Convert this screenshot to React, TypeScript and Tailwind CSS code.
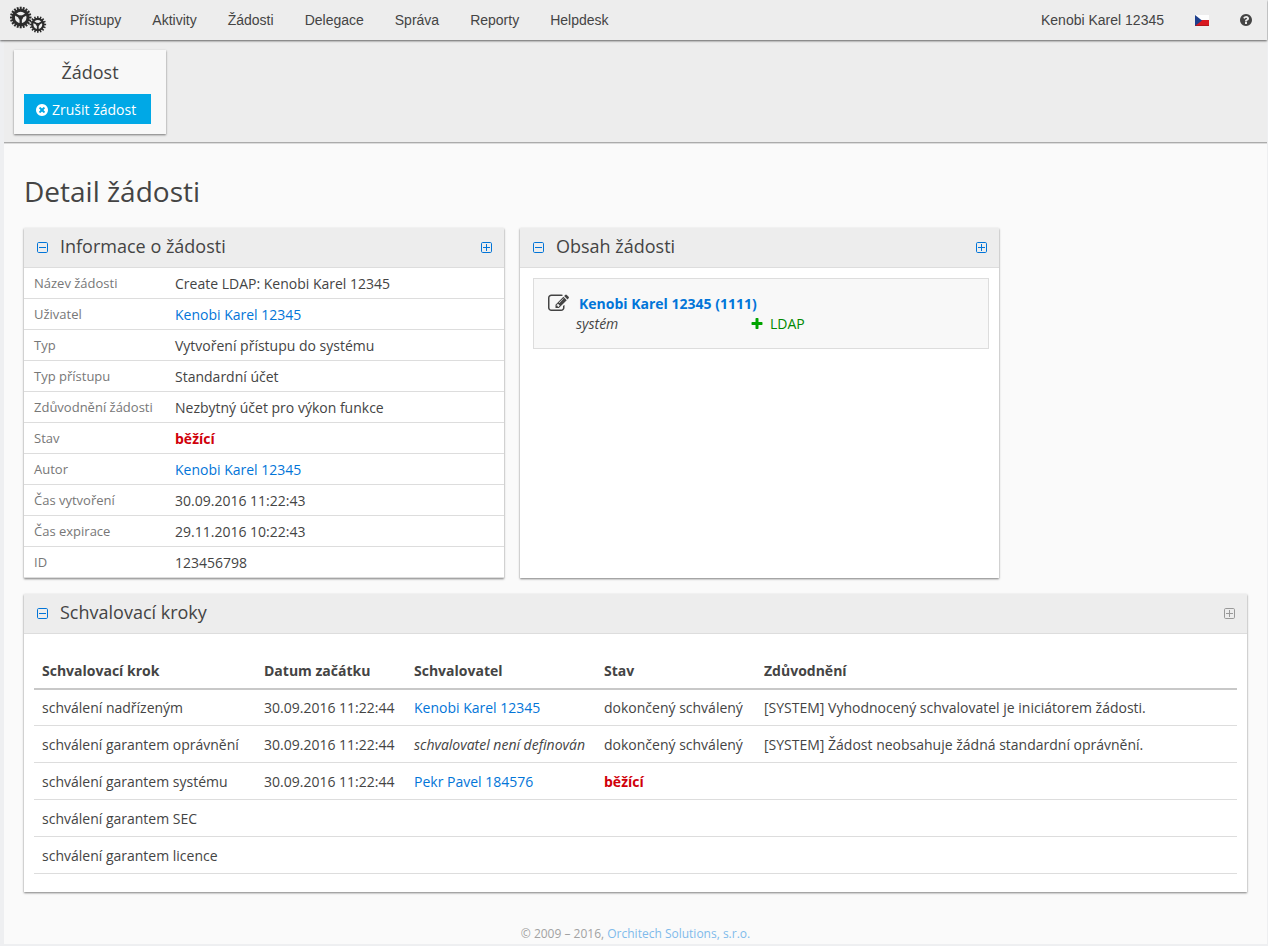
import React from "react";

const ICONS = {
  edit: "M888 1184l116-116-152-152-116 116v56h96v96h56zm440-720q-16-16-33 1l-350 350q-17 17-1 33t33-1l350-350q17-17 1-33zm80 594v190q0 119-84.5 203.5t-203.5 84.5h-832q-119 0-203.5-84.5t-84.5-203.5v-832q0-119 84.5-203.5t203.5-84.5h832q63 0 117 25 15 7 18 23 3 17-9 29l-49 49q-14 14-32 8-23-6-45-6h-832q-66 0-113 47t-47 113v832q0 66 47 113t113 47h832q66 0 113-47t47-113v-126q0-13 9-22l64-64q15-15 35-7t20 29zm-96-738l288 288-672 672h-288v-288zm444 132l-92 92-288-288 92-92q28-28 68-28t68 28l152 152q28 28 28 68t-28 68z",
  plus: "M1600 736v192q0 40-28 68t-68 28h-416v416q0 40-28 68t-68 28h-192q-40 0-68-28t-28-68v-416h-416q-40 0-68-28t-28-68v-192q0-40 28-68t68-28h416v-416q0-40 28-68t68-28h192q40 0 68 28t28 68v416h416q40 0 68 28t28 68z",
  cancel:
    "M1277 1122q0-26-19-45l-181-181 181-181q19-19 19-45 0-27-19-46l-90-90q-19-19-46-19-26 0-45 19l-181 181-181-181q-19-19-45-19-27 0-46 19l-90 90q-19 19-19 46 0 26 19 45l181 181-181 181q-19 19-19 45 0 27 19 46l90 90q19 19 46 19 26 0 45-19l181-181 181 181q19 19 45 19 27 0 46-19l90-90q19-19 19-46zm387-226q0 209-103 385.5t-279.5 279.5-385.5 103-385.5-103-279.5-279.5-103-385.5 103-385.5 279.5-279.5 385.5-103 385.5 103 279.5 279.5 103 385.5z",
  help:
    "M1024 1376v-192q0-14-9-23t-23-9h-192q-14 0-23 9t-9 23v192q0 14 9 23t23 9h192q14 0 23-9t9-23zm256-672q0-88-55.5-163t-138.5-116-170-41q-243 0-371 213-15 24 8 42l132 100q7 6 19 6 16 0 25-12 53-68 86-92 34-24 86-24 48 0 85.5 26t37.5 59q0 38-20 61t-68 45q-63 28-115.5 86.5t-52.5 125.5v36q0 14 9 23t23 9h192q14 0 23-9t9-23q0-19 21.5-49.5t54.5-49.5q32-18 49-28.5t46-35 44.5-48 28-60.5 12.5-81zm384 192q0 209-103 385.5t-279.5 279.5-385.5 103-385.5-103-279.5-279.5-103-385.5 103-385.5 279.5-279.5 385.5-103 385.5 103 279.5 279.5 103 385.5z",
};

function Icon({ name, className }: { name: keyof typeof ICONS; className: string }) {
  return (
    <svg viewBox="0 0 1792 1792" fill="currentColor" aria-hidden="true" className={className}>
      <path d={ICONS[name]} />
    </svg>
  );
}

function Gear({ cx, cy, r, teeth }: { cx: number; cy: number; r: number; teeth: number }) {
  return (
    <g transform={`translate(${cx} ${cy}) scale(${r / 11})`}>
      {Array.from({ length: teeth }, (_, i) => (
        <rect key={i} x="-1" y="-11" width="2" height="3.5" transform={`rotate(${(i * 360) / teeth})`} />
      ))}
      <circle r="7.4" fill="none" stroke="currentColor" strokeWidth="3" />
      {[60, 180, 300].map((angle) => (
        <rect key={angle} x="-1.2" y="-7" width="2.4" height="7" transform={`rotate(${angle})`} />
      ))}
      <circle r="2.4" />
    </g>
  );
}

function Logo() {
  return (
    <svg viewBox="0 0 37 28" fill="currentColor" aria-hidden="true" className="h-7 w-[37px] text-[#2c2c2c]">
      <Gear cx={10.7} cy={11.5} r={10.8} teeth={20} />
      <Gear cx={27.8} cy={18.5} r={8.3} teeth={16} />
    </svg>
  );
}

function Flag() {
  return (
    <svg viewBox="0 0 14 11" aria-hidden="true" className="h-[11px] w-3.5">
      <rect width="14" height="5.5" fill="#fdfdfd" />
      <rect y="5" width="14" height="6" fill="#d81820" />
      <rect y="10" width="14" height="1" fill="#b3161c" />
      <path d="M0 0L7 5.5L0 11z" fill="#1d3f8c" />
    </svg>
  );
}

function ToggleBox({ plus, muted, label }: { plus?: boolean; muted?: boolean; label: string }) {
  return (
    <button type="button" aria-label={label} className={muted ? "text-[#999]" : "text-[#0275d8]"}>
      <svg viewBox="0 0 11 11" fill="none" stroke="currentColor" className="size-[11px]" aria-hidden="true">
        <rect x=".5" y=".5" width="10" height="10" rx="1.2" />
        <path d={plus ? "M2 5.5H9M5.5 2V9" : "M2 5.5H9"} />
      </svg>
    </button>
  );
}

function Panel({
  title,
  muted,
  className,
  children,
}: {
  title: string;
  muted?: boolean;
  className: string;
  children: React.ReactNode;
}) {
  return (
    <section className={`bg-white shadow-[0_1px_2px_rgba(0,0,0,0.5)] ${className}`}>
      <header className="flex h-10 items-center border-b border-[#ddd] bg-[#ededed] pr-3 pl-[13px]">
        <ToggleBox label="Sbalit" />
        <h2 className="ml-3 flex-1 pb-1 text-[18px] leading-6">{title}</h2>
        <ToggleBox plus muted={muted} label="Rozbalit" />
      </header>
      {children}
    </section>
  );
}

function UserLink({ children }: { children: React.ReactNode }) {
  return (
    <a href="#user" className="text-[#0275d8]">
      {children}
    </a>
  );
}

const running = <strong className="font-bold text-[#d0000a]">běžící</strong>;

const info: [string, React.ReactNode][] = [
  ["Název žádosti", "Create LDAP: Kenobi Karel 12345"],
  ["Uživatel", <UserLink>Kenobi Karel 12345</UserLink>],
  ["Typ", "Vytvoření přístupu do systému"],
  ["Typ přístupu", "Standardní účet"],
  ["Zdůvodnění žádosti", "Nezbytný účet pro výkon funkce"],
  ["Stav", running],
  ["Autor", <UserLink>Kenobi Karel 12345</UserLink>],
  ["Čas vytvoření", "30.09.2016 11:22:43"],
  ["Čas expirace", "29.11.2016 10:22:43"],
  ["ID", "123456798"],
];

const columns: [string, string][] = [
  ["Schvalovací krok", "w-[222px]"],
  ["Datum začátku", "w-[150px]"],
  ["Schvalovatel", "w-[190px]"],
  ["Stav", "w-40"],
  ["Zdůvodnění", ""],
];

const steps: React.ReactNode[][] = [
  [
    "schválení nadřízeným",
    "30.09.2016 11:22:44",
    <UserLink>Kenobi Karel 12345</UserLink>,
    "dokončený schválený",
    "[SYSTEM] Vyhodnocený schvalovatel je iniciátorem žádosti.",
  ],
  [
    "schválení garantem oprávnění",
    "30.09.2016 11:22:44",
    <em>schvalovatel není definován</em>,
    "dokončený schválený",
    "[SYSTEM] Žádost neobsahuje žádná standardní oprávnění.",
  ],
  ["schválení garantem systému", "30.09.2016 11:22:44", <UserLink>Pekr Pavel 184576</UserLink>, running, ""],
  ["schválení garantem SEC", "", "", "", ""],
  ["schválení garantem licence", "", "", "", ""],
];

const menu = ["Přístupy", "Aktivity", "Žádosti", "Delegace", "Správa", "Reporty", "Helpdesk"];

export default function App() {
  return (
    <div className="flex min-h-screen flex-col bg-[#eeeff1] pb-0.5 font-['Open_Sans',sans-serif] text-[14px] leading-5 text-[#444]">
      <nav className="relative z-20 mr-px flex h-10 items-center bg-[#ededed] pl-2.5 font-['Liberation_Sans',Arial,sans-serif] shadow-[0_1px_2px_rgba(0,0,0,0.6)]">
        <a href="#home" aria-label="Domů">
          <Logo />
        </a>
        <ul className="ml-2 flex flex-1 gap-px">
          {menu.map((item) => (
            <li key={item}>
              <a href="#menu" className="block px-[15px] py-2.5">
                {item}
              </a>
            </li>
          ))}
        </ul>
        <a href="#profile" className="px-[15px] py-2.5">
          Kenobi Karel 12345
        </a>
        <a href="#language" aria-label="Čeština" className="px-4">
          <Flag />
        </a>
        <a href="#help" aria-label="Nápověda" className="px-3.5">
          <Icon name="help" className="size-3.5" />
        </a>
      </nav>

      <div className="relative z-10 mr-px ml-1 bg-[#ededed] px-2.5 pt-2.5 pb-2 shadow-[0_1px_0_#ababab,0_2px_0_#dcdcdc]">
        <div className="w-[152px] bg-[#f8f8f8] p-2.5 shadow-[0_1px_2px_rgba(0,0,0,0.5)]">
          <h2 className="mb-2.5 text-center text-[18px] leading-6">Žádost</h2>
          <button type="button" className="flex h-[30px] items-center gap-[3px] bg-[#00a8e6] pt-px pr-[15px] pl-[11px] text-white">
            <Icon name="cancel" className="size-3.5" />
            Zrušit žádost
          </button>
        </div>
      </div>

      <main className="mr-px ml-1 flex-1 bg-[#fafafa] px-5 pt-[29px]">
        <h1 className="mb-[17px] text-[28px] leading-10">Detail žádosti</h1>
        <div className="flex flex-wrap gap-4">
          <Panel title="Informace o žádosti" className="w-[480px]">
            <table className="w-full border-separate border-spacing-0 text-left">
              <tbody>
                {info.map(([label, value]) => (
                  <tr key={label} className="h-[31px]">
                    <th scope="row" className="w-[151px] border-b border-[#ddd] pl-2.5 text-[13px] font-normal text-[#777]">
                      {label}
                    </th>
                    <td className="border-b border-[#ddd] pt-0.5">{value}</td>
                  </tr>
                ))}
              </tbody>
            </table>
          </Panel>
          <Panel title="Obsah žádosti" className="w-[479px]">
            <div className="mt-2.5 mr-2.5 ml-[13px] border border-[#ddd] bg-[#f8f8f8] px-3.5 py-3.5">
              <div className="flex items-center gap-2.5">
                <Icon name="edit" className="size-[21px]" />
                <a href="#detail" className="font-bold text-[#0275d8]">
                  Kenobi Karel 12345 (1111)
                </a>
              </div>
              <div className="flex pl-7">
                <em className="w-[174px]">systém</em>
                <span className="flex items-center gap-1.5 text-[#008800]">
                  <Icon name="plus" className="size-3.5 text-[#00a400]" />
                  LDAP
                </span>
              </div>
            </div>
          </Panel>
          <Panel title="Schvalovací kroky" muted className="w-full">
            <div className="px-2.5 py-[18px]">
              <table className="w-full border-separate border-spacing-0 text-left">
                <thead>
                  <tr>
                    {columns.map(([name, width]) => (
                      <th key={name} className={`border-b-2 border-[#c8c8c8] px-2 pt-[9px] pb-[7px] ${width}`}>
                        {name}
                      </th>
                    ))}
                  </tr>
                </thead>
                <tbody>
                  {steps.map((row, i) => (
                    <tr key={i} className="group">
                      {row.map((cell, j) => (
                        <td key={j} className="border-b border-[#ddd] px-2 pt-[9px] pb-[7px] group-first:pt-2">
                          {cell}
                        </td>
                      ))}
                    </tr>
                  ))}
                </tbody>
              </table>
            </div>
          </Panel>
        </div>
        <footer className="mt-8 text-center text-[12px] text-[#a2a2a2]">
          © 2009 – 2016,{" "}
          <a href="#company" className="text-[#80baeb]">
            Orchitech Solutions, s.r.o.
          </a>
        </footer>
      </main>
    </div>
  );
}
